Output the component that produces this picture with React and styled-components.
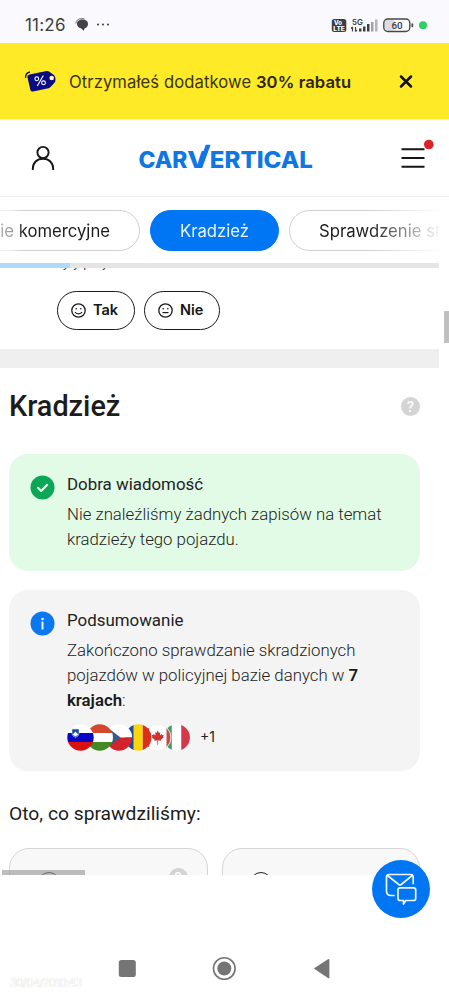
import React from "react";
import styled, { createGlobalStyle } from "styled-components";

const Global = createGlobalStyle`
  * { box-sizing: border-box; }
  body { margin: 0; background: #fff; font-family: Inter, sans-serif; color: #1b1b1b; }
  svg { display: block; flex: none; overflow: visible; }
`;

const Screen = styled.div`
  position: relative;
  width: 449px;
  height: 998px;
  overflow: hidden;
  background: #fff;
  display: flex;
  flex-direction: column;
`;

const StatusBar = styled.div`
  height: 43px;
  flex: none;
  background: #f9f9fe;
  display: flex;
  align-items: center;
  padding: 6px 22px 0 25px;
`;
const Clock = styled.span`
  font: 400 17px/20px Inter, sans-serif;
  letter-spacing: 0.2px;
  color: #3c3c40;
  width: 50px;
`;
const StatusIcons = styled.div`
  margin-left: auto;
`;

const Banner = styled.div`
  height: 77px;
  flex: none;
  background: #ffea28;
  border-bottom: 1px solid #fff8b0;
  display: flex;
  align-items: center;
  padding-left: 24px;
`;
const BannerText = styled.span`
  width: 316px;
  margin-left: 13px;
  padding-top: 1px;
  font: 400 16.6px/24px Inter, sans-serif;
  color: #3a3408;
  letter-spacing: 0.1px;
  white-space: nowrap;
  b { font-weight: 600; color: #2a2506; }
`;
const CloseBox = styled.div`
  margin-left: 14px;
`;

const Header = styled.header`
  height: 77px;
  flex: none;
  border-bottom: 1px solid #f0f0f0;
  display: flex;
  align-items: center;
  padding-left: 31px;
`;
const LogoBox = styled.div`
  margin-left: 84px;
  width: 176px;
`;
const MenuBox = styled.div`
  margin-left: 85px;
  padding-bottom: 8px;
`;

const Tabs = styled.nav`
  height: 66px;
  width: 439px;
  flex: none;
  padding-top: 13px;
  display: flex;
  gap: 10px;
  overflow: hidden;
  mask-image: linear-gradient(to right, rgba(0,0,0,.35) 0, rgba(0,0,0,.45) 12px, #000 24px, #000 370px, transparent 442px);
`;
const Tab = styled.div`
  flex: none;
  height: 41px;
  width: ${(p) => p.$w}px;
  margin-left: ${(p) => p.$shift || 0}px;
  padding: 0 29px;
  border-radius: 21px;
  border: 1px solid ${(p) => (p.$active ? "#0076f5" : "#cfcfcf")};
  background: ${(p) => (p.$active ? "#0076f5" : "#fff")};
  color: ${(p) => (p.$active ? "#e9f4ff" : "#1c1c1c")};
  font: 400 16.7px/40px Inter, sans-serif;
  white-space: nowrap;
  display: flex;
  justify-content: ${(p) => p.$align || "flex-start"};
`;

const Progress = styled.div`
  width: 439px;
  height: 5px;
  flex: none;
  background: #e5e5e5;
`;
const ProgressFill = styled.div`
  width: 70px;
  height: 5px;
  background: #acd9fc;
`;

const ClippedLine = styled.div`
  height: 3px;
  flex: none;
  overflow: hidden;
  display: flex;
  align-items: flex-end;
  padding-left: 63px;
  font: 400 13px/16px Roboto, sans-serif;
  letter-spacing: 0.4px;
  color: #444;
  white-space: pre;
`;

const Answers = styled.div`
  height: 78px;
  flex: none;
  padding: 20px 0 0 57px;
  display: flex;
  gap: 9px;
`;
const Answer = styled.button`
  width: ${(p) => p.$w}px;
  height: 39px;
  padding: 0 0 1px 13px;
  border: 1.3px solid #1a1a1a;
  border-radius: 20px;
  background: #fff;
  display: flex;
  align-items: center;
  gap: 7px;
  font: 600 14.5px/20px Inter, sans-serif;
  color: #151515;
`;

const Divider = styled.div`
  width: 439px;
  height: 19px;
  flex: none;
  background: #efefef;
`;

const Section = styled.section`
  width: 429px;
  height: 507px;
  flex: none;
  overflow: hidden;
  padding: 0 9px;
  display: flex;
  flex-direction: column;
`;
const TitleRow = styled.div`
  height: 86px;
  flex: none;
  display: flex;
  justify-content: space-between;
  padding-top: 20px;
`;
const Title = styled.h1`
  margin: 0;
  font: 500 28.8px/36px Roboto, sans-serif;
  color: #1c1c1c;
`;
const HelpDot = styled.div`
  width: 19px;
  height: 19px;
  margin-top: ${(p) => p.$top}px;
  border-radius: 50%;
  background: #d4d4d4;
  color: #fff;
  font: 500 14px/19px Inter, sans-serif;
  text-align: center;
`;

const Notice = styled.article`
  height: ${(p) => p.$h}px;
  flex: none;
  margin-bottom: 19px;
  border-radius: 19px;
  background: ${(p) => p.$bg};
  padding: 20px 20px 0 21px;
  display: flex;
  gap: 12px;
`;
const NoticeBadge = styled.div`
  padding-top: 1px;
`;
const NoticeHeading = styled.h2`
  margin: 0 0 7px;
  font: 450 16.9px/21px Roboto, sans-serif;
  color: #222;
`;
const NoticeText = styled.p`
  margin: 0;
  font: 300 16.8px/25.2px Roboto, sans-serif;
  color: #222;
  white-space: nowrap;
  b { font-weight: 600; color: #1a1a1a; }
`;
const Line = styled.span`
  display: block;
`;
const Flags = styled.div`
  display: flex;
  align-items: center;
  gap: 9px;
  margin-top: 10px;
  font: 400 14px/20px Inter, sans-serif;
  color: #222;
`;

const Subtitle = styled.h3`
  height: 58px;
  flex: none;
  margin: 0;
  padding-top: 12px;
  font: 400 19.25px/24px Roboto, sans-serif;
  color: #1d1d1d;
`;
const Checks = styled.div`
  display: flex;
  gap: 14px;
`;
const CheckCard = styled.div`
  width: 198.5px;
  height: 60px;
  border: 1px solid #d5d5d5;
  border-radius: 20px;
  background: #f8f8f8;
  padding: 0 19px 0 27.5px;
  display: flex;
  justify-content: space-between;
`;
const Ring = styled.div`
  width: 22px;
  height: 22px;
  margin-top: 22.5px;
  border: 1.8px solid #222;
  border-radius: 50%;
`;

const SystemNav = styled.footer`
  height: 123px;
  flex: none;
  padding: 80px 0 0 118px;
  display: flex;
`;
const Stamp = styled.div`
  position: absolute;
  left: 10px;
  top: 976px;
  font: 400 11.5px/14px Inter, sans-serif;
  letter-spacing: -0.75px;
  color: #fff;
  text-shadow: 0 0 1px #c4c4c4;
`;
const VerticalScroll = styled.div`
  position: absolute;
  right: 0;
  top: 311px;
  width: 5px;
  height: 32px;
  background: #c0c0c0;
`;
const HorizontalScroll = styled.div`
  position: absolute;
  left: 2px;
  top: 870px;
  width: 83px;
  height: 5px;
  background: rgba(150, 150, 150, 0.62);
`;
const ChatButton = styled.button`
  position: absolute;
  left: 372px;
  top: 860px;
  width: 58px;
  height: 58px;
  padding: 0;
  border: 0;
  border-radius: 50%;
  background: #0076f2;
`;

const StatusLeft = () => (
  <svg width="38" height="14" viewBox="0 0 38 14">
    <path d="M7.500 1.600C10.800 1.600 13 3.300 13 6c0 2.200-1.400 3.700-3.200 4.200L8.600 12.800 6 10.300C3.600 9.800 2 8.200 2 6c0-2.700 2.200-4.400 5.500-4.400z" fill="#444448" />
    <path d="M.9 5.600C.9 2.600 3 .7 6.500.6L9.500.7" fill="none" stroke="#77777c" strokeWidth="1" />
    <g fill="#4a4a4e"><circle cx="23" cy="6.500" r="1.100" /><circle cx="28" cy="6.500" r="1.100" /><circle cx="33" cy="6.500" r="1.100" /></g>
  </svg>
);

const StatusRight = () => (
  <svg width="97" height="16" viewBox="0 0 97 16" fontFamily="Inter, sans-serif">
    <rect x="1.800" y="2" width="14.500" height="13" rx="2.500" fill="#3e3e42" />
    <g fill="#fff" fontSize="6" fontWeight="800">
      <text x="4" y="8">Vo</text>
      <text x="3.300" y="14" textLength="11.500" lengthAdjust="spacingAndGlyphs">LTE</text>
    </g>
    <text x="22" y="7.500" fontSize="7.800" fontWeight="600" fill="#3a3a3e">5G</text>
    <path d="M22.500 14.500V10M21 11.500 22.500 10M25.500 10v4.500M27 13l-1.500 1.500" stroke="#444" strokeWidth="1.200" fill="none" />
    <g fill="#3e3e42">
      <rect x="29" y="11.500" width="2.500" height="3" />
      <rect x="33" y="9.500" width="2.500" height="5" />
      <rect x="37" y="7" width="2.500" height="7.500" />
    </g>
    <rect x="41" y="5" width="2.500" height="9.500" fill="#a0a0a4" />
    <rect x="45" y="2.500" width="2.500" height="12" fill="#b4b4b8" />
    <rect x="55" y="3" width="10" height="10.500" rx="2.500" fill="#dcdce1" />
    <rect x="53.800" y="2" width="26" height="12.500" rx="4" fill="none" stroke="#47474b" strokeWidth="1.400" />
    <rect x="81.500" y="6.300" width="1.700" height="4" rx=".8" fill="#47474b" />
    <text x="61.500" y="11.800" fontSize="9.800" fontWeight="500" fontFamily="Roboto, sans-serif" fill="#3a3a3e">60</text>
    <circle cx="93" cy="8.200" r="4" fill="#2dce63" />
  </svg>
);

const TagIcon = () => (
  <svg width="32" height="24" viewBox="0 0 32 24">
    <path d="M1.500 9C1.500 5.500 3 3.500 6 3" fill="none" stroke="#1a1a38" strokeWidth="1.300" />
    <path d="M5.500 5.500 22.500 2q1.300-.2 2.500.5l4.500 3.200q1.500 1.200 1.800 3l.2 1.800q.2 2-1 3.300l-4 4.200q-.8.9-2 1.200L9 22.500q-2 .4-2.600-1.600L3.500 8.500q-.5-2.500 2-3z" fill="#0b0b83" />
    <circle cx="27.700" cy="9" r="2.300" fill="#fff6b0" />
    <g fill="none" stroke="#fff" strokeWidth="1.100"><circle cx="12.800" cy="9.800" r="1.900" /><circle cx="19.500" cy="13.800" r="1.900" /><path d="M19.300 6.500 13.300 17" /></g>
  </svg>
);

const CloseIcon = () => (
  <svg width="14" height="14" viewBox="0 0 14 14"><path d="M2 2.500 12 12.500M12 2.500 2 12.500" stroke="#111" strokeWidth="2.500" strokeLinecap="round" /></svg>
);

const UserIcon = () => (
  <svg width="24" height="26" viewBox="0 0 24 26" fill="none" stroke="#151515" strokeWidth="1.900">
    <circle cx="12" cy="7.500" r="5.600" />
    <path d="M1.800 25v-1.200C1.800 17.800 6 13.800 12 13.800s10.200 4 10.200 10V25" />
  </svg>
);

const Logo = () => (
  <svg width="176" height="26" viewBox="0 0 176 26" fill="#0f76e6" fontFamily="Inter, sans-serif" fontWeight="800" fontSize="22.500">
    <text x="-.6" y="23" textLength="49" lengthAdjust="spacingAndGlyphs">CAR</text>
    <text x="48.300" y="23" textLength="20" lengthAdjust="spacingAndGlyphs">V</text>
    <path d="M58.500 23h4.700L71.600-.2h-4.800z" />
    <text x="70.800" y="23" textLength="103" lengthAdjust="spacingAndGlyphs">ERTICAL</text>
  </svg>
);

const MenuIcon = () => (
  <svg width="34" height="32" viewBox="0 0 34 32">
    <path d="M1.500 11.200H24.500M1.500 20H24.500M1.500 28.700H24.500" stroke="#151515" strokeWidth="1.900" />
    <circle cx="28.800" cy="6.500" r="4.800" fill="#d8232a" />
  </svg>
);

const Face = ({ smile }) => (
  <svg width="15" height="15" viewBox="0 0 15 15" fill="none" stroke="#1a1a1a" strokeWidth="1.200">
    <circle cx="7.500" cy="7.500" r="6.700" strokeWidth="1.300" />
    <circle cx="5.200" cy="5.700" r=".8" fill="#1a1a1a" stroke="none" />
    <circle cx="9.800" cy="5.700" r=".8" fill="#1a1a1a" stroke="none" />
    {smile ? <path d="M4 9c1.500 2.500 5.500 2.500 7 0" /> : <path d="M4.500 9.600h6" />}
  </svg>
);

const StateIcon = ({ info }) => (
  <svg width="25" height="25" viewBox="0 0 25 25">
    <circle cx="12.500" cy="12.500" r="12" fill={info ? "#0b77f1" : "#0ba656"} />
    {info ? (
      <g fill="#e6f4ff"><circle cx="12.500" cy="8" r="1.300" /><rect x="11.500" y="10.500" width="2" height="8" rx=".6" /></g>
    ) : (
      <path d="m8 12.800 3.200 3.200 6-6.200" fill="none" stroke="#eafff2" strokeWidth="2.100" strokeLinecap="round" strokeLinejoin="round" />
    )}
  </svg>
);

const bands = {
  it: <><rect width="27" height="27" fill="#fff" /><rect width="8.500" height="27" fill="#3a9c64" /><rect x="18" width="9" height="27" fill="#d3394b" /></>,
  ca: <><rect width="27" height="27" fill="#fff" /><rect width="5" height="27" fill="#d63a3a" /><rect x="22.500" width="5" height="27" fill="#c94a43" /><path transform="translate(3.200 2.700) scale(.78)" d="m13.500 5 1.600 3 1.700-.8-.5 4 2.200-2 .6 1.500 2-.2-.8 2.400 1 .7-3.800 3 .4 1.300-3.900-.5V23h-1v-5.600l-3.900.5.4-1.300-3.800-3 1-.7-.8-2.400 2 .2.6-1.500 2.200 2-.5-4 1.700.8z" fill="#d42f2f" /></>,
  ro: <><rect width="9" height="27" fill="#1c4da0" /><rect x="9" width="9" height="27" fill="#fbd60b" /><rect x="18" width="9" height="27" fill="#dc2d1e" /></>,
  cz: <><rect width="27" height="13.500" fill="#fff" /><rect y="13.500" width="27" height="13.500" fill="#d3232d" /><path d="M0 2v23l15-11.500z" fill="#355c8c" /></>,
  hu: <><rect width="27" height="9" fill="#d4472f" /><rect y="9" width="27" height="9" fill="#fff" /><rect y="18" width="27" height="9" fill="#438a24" /></>,
  si: <><rect width="27" height="9" fill="#fff" /><rect y="9" width="27" height="9" fill="#0808c4" /><rect y="18" width="27" height="9" fill="#db1010" /><path d="M5 5h7v4.500q0 2.500-3.500 4-3.500-1.500-3.500-4z" fill="#1547a5" stroke="#d9dff1" strokeWidth=".6" /><path d="m5.700 10.500 2.800-3 2.800 3-2.800 2z" fill="#fff" /></>,
};
const order = ["it", "ca", "ro", "cz", "hu", "si"];

const FlagStack = () => (
  <svg width="124" height="27" viewBox="0 0 124 27">
    <defs><clipPath id="disc"><circle cx="13.500" cy="13.500" r="13.200" /></clipPath></defs>
    {order.map((code, i) => (
      <g key={code} transform={`translate(${(5 - i) * 19.25} 0)`}>
        <g clipPath="url(#disc)">{bands[code]}</g>
        {code === "ca" && <circle cx="13.500" cy="13.500" r="13.500" fill="none" stroke="#eee" strokeWidth=".9" />}
      </g>
    ))}
  </svg>
);

const SystemIcons = () => (
  <svg width="214" height="28" viewBox="0 0 214 28" fill="#757575">
    <rect x=".8" y="5" width="17" height="17" rx="2.500" />
    <circle cx="106.300" cy="13.500" r="10.800" fill="none" stroke="#757575" strokeWidth="1.600" />
    <circle cx="106.300" cy="13.500" r="7" />
    <path d="M195.800 13.500 210 4.200q1.400-.8 1.400.7v17.500q0 1.500-1.400.7z" />
  </svg>
);

const ChatIcon = () => (
  <svg width="58" height="58" viewBox="0 0 58 58" fill="none" stroke="#eef7ff" strokeWidth="1.700" strokeLinecap="round" strokeLinejoin="round">
    <path d="M22 35.500h-3q-4.500 0-4.500-4.500V17q0-2.500 2.500-2.500h21.500q2.700 0 2.700 2.500v6.500" />
    <path d="m15.500 15.500 11.300 9q1.200.9 2.400 0l11-9" />
    <path d="M28 27.800h13.500q2.200 0 2.200 2v8.700q0 2-2.200 2h-7.700L31.500 44v-3.500H28q-2 0-2-2v-8.700q0-2 2-2z" />
  </svg>
);

export default function App() {
  return (
    <Screen>
      <Global />
      <StatusBar>
        <Clock>11:26</Clock>
        <StatusLeft />
        <StatusIcons><StatusRight /></StatusIcons>
      </StatusBar>
      <Banner>
        <TagIcon />
        <BannerText>Otrzymałeś dodatkowe <b>30% rabatu</b></BannerText>
        <CloseBox><CloseIcon /></CloseBox>
      </Banner>
      <Header>
        <UserIcon />
        <LogoBox><Logo /></LogoBox>
        <MenuBox><MenuIcon /></MenuBox>
      </Header>
      <Tabs>
        <Tab $w={220} $shift={-80} $align="flex-end">Finansowanie komercyjne</Tab>
        <Tab $w={129} $active>Kradzież</Tab>
        <Tab $w={240}>Sprawdzenie stanu</Tab>
      </Tabs>
      <Progress><ProgressFill /></Progress>
      <ClippedLine><span>y y p   y</span></ClippedLine>
      <Answers>
        <Answer $w={78}><Face smile />Tak</Answer>
        <Answer $w={76}><Face />Nie</Answer>
      </Answers>
      <Divider />
      <Section>
        <TitleRow>
          <Title>Kradzież</Title>
          <HelpDot $top={9}>?</HelpDot>
        </TitleRow>
        <Notice $h={117} $bg="#e2fbe6">
          <NoticeBadge><StateIcon /></NoticeBadge>
          <div>
            <NoticeHeading>Dobra wiadomość</NoticeHeading>
            <NoticeText>
              <Line>Nie znaleźliśmy żadnych zapisów na temat</Line>
              <Line>kradzieży tego pojazdu.</Line>
            </NoticeText>
          </div>
        </Notice>
        <Notice $h={181} $bg="#f4f4f4">
          <NoticeBadge><StateIcon info /></NoticeBadge>
          <div>
            <NoticeHeading>Podsumowanie</NoticeHeading>
            <NoticeText>
              <Line>Zakończono sprawdzanie skradzionych</Line>
              <Line>pojazdów w policyjnej bazie danych w <b>7</b></Line>
              <Line><b>krajach</b>:</Line>
            </NoticeText>
            <Flags><FlagStack />+1</Flags>
          </div>
        </Notice>
        <Subtitle>Oto, co sprawdziliśmy:</Subtitle>
        <Checks>
          <CheckCard><Ring /><HelpDot $top={19}>?</HelpDot></CheckCard>
          <CheckCard><Ring /></CheckCard>
        </Checks>
      </Section>
      <SystemNav><SystemIcons /></SystemNav>
      <VerticalScroll />
      <HorizontalScroll />
      <ChatButton aria-label="Chat"><ChatIcon /></ChatButton>
      <Stamp>30/04/2010:43</Stamp>
    </Screen>
  );
}
